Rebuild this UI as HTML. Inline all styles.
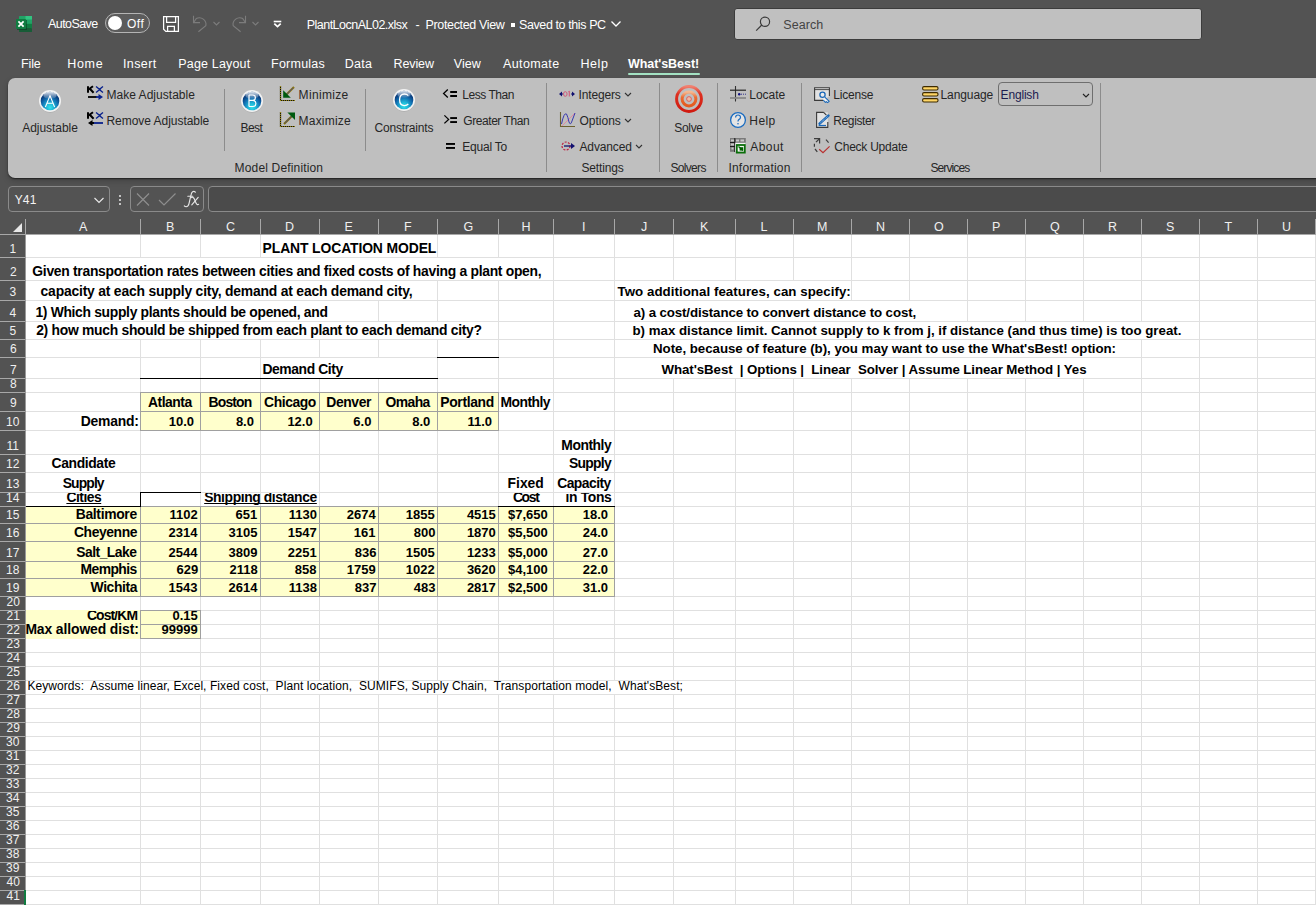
<!DOCTYPE html>
<html><head><meta charset="utf-8"><style>
html,body{margin:0;padding:0}
body{width:1316px;height:905px;overflow:hidden;position:relative;background:#535353;font-family:"Liberation Sans",sans-serif}
.t{position:absolute;white-space:pre;line-height:normal;color:#000;text-decoration-skip-ink:none}
svg{overflow:visible}
</style></head><body>
<div style="position:absolute;left:105px;top:13px;width:43px;height:18px;border:1px solid #b4b4b4;border-radius:10px;background:#5c5c5c"></div><div style="position:absolute;left:108px;top:16px;width:14px;height:14px;border-radius:7px;background:#fff"></div><svg style="position:absolute;left:0;top:0" width="40" height="40" viewBox="0 0 40 40">
<rect x="19" y="16" width="13" height="16" rx="0.6" fill="#21a366"/>
<rect x="25.5" y="16" width="6.5" height="3.5" fill="#33c481"/>
<rect x="19" y="23.8" width="13" height="4.3" fill="#107c41"/>
<rect x="19" y="28" width="13" height="4" rx="0.6" fill="#185c37"/>
<rect x="17" y="20" width="10" height="10" fill="#0a3a20" opacity="0.55"/>
<rect x="16" y="19" width="10" height="10" rx="0.8" fill="#107c41"/>
<path d="M18.4 21.3 L23.6 26.7 M23.6 21.3 L18.4 26.7" stroke="#fff" stroke-width="1.7"/>
</svg><svg style="position:absolute;left:0;top:0" width="200" height="40" viewBox="0 0 200 40" fill="none" stroke="#fff" stroke-width="1.25">
<path d="M163.6 16.6 H178.4 V31.4 H165.8 L163.6 29.2 Z"/>
<path d="M166.6 16.6 V22.4 H175.6 V16.6"/>
<path d="M167.6 31.4 V26.4 H174.4 V31.4"/>
</svg><svg style="position:absolute;left:0;top:0" width="300" height="45" viewBox="0 0 300 45" fill="none">
<g stroke="#7c7c7c" stroke-width="1.1">
<path d="M193.5 15.8 V22.6 H200"/>
<path d="M193.8 22.3 L196.2 18.6 A6.6 6.6 0 0 1 205.8 25.8 L198.4 31.8"/>
<path d="M213.5 22 L216.5 25 L219.5 22"/>
<path d="M245.5 15.8 V22.6 H239"/>
<path d="M245.2 22.3 L242.8 18.6 A6.6 6.6 0 0 0 233.2 25.8 L240.6 31.8"/>
<path d="M252.5 22 L255.5 25 L258.5 22"/>
</g>
<path d="M273.7 21.5 H281.3" stroke="#fff" stroke-width="1.6"/>
<path d="M274.3 23.6 L277.5 26.6 L280.7 23.6" stroke="#fff" stroke-width="1.7"/>
</svg><div style="position:absolute;left:511px;top:23px;width:4px;height:4px;background:#fff;"></div><svg style="position:absolute;left:610px;top:20px" width="12" height="8" viewBox="0 0 12 8" fill="none" stroke="#fff" stroke-width="1.3">
<path d="M1.5 1.5 L6 6 L10.5 1.5"/></svg><div style="position:absolute;left:734px;top:8px;width:466px;height:30px;background:#c0c0c0;border:1px solid #3c3c3c;border-radius:3px;box-sizing:content-box"></div><svg style="position:absolute;left:754px;top:15px" width="18" height="18" viewBox="0 0 18 18" fill="none" stroke="#3a3a3a" stroke-width="1.2">
<circle cx="11" cy="6.8" r="4.6"/><path d="M7.8 10 L2.2 15.6"/></svg><div style="position:absolute;left:628px;top:73px;width:72px;height:2px;background:#a3e2c3;border-radius:1px"></div><div style="position:absolute;left:8px;top:78px;width:1320px;height:100px;background:#bfbfbf;border-radius:7px;box-shadow:0 1px 1.5px rgba(0,0,0,0.55), 0 3px 6px rgba(0,0,0,0.18)"></div><svg style="position:absolute;left:38px;top:88.5px" width="24" height="25" viewBox="0 0 24 25">
<defs><radialGradient id="ga" cx="0.5" cy="0.78" r="0.62" fx="0.5" fy="0.85">
<stop offset="0" stop-color="#35e2ea"/><stop offset="0.35" stop-color="#1fb4d6"/><stop offset="0.7" stop-color="#1170b2"/><stop offset="1" stop-color="#0a3f80"/></radialGradient>
<linearGradient id="gah" x1="0" y1="0" x2="0" y2="1"><stop offset="0" stop-color="#ffffff" stop-opacity="0.85"/><stop offset="1" stop-color="#ffffff" stop-opacity="0.05"/></linearGradient></defs>
<ellipse cx="12" cy="13.2" rx="10.6" ry="10.6" fill="#808080" opacity="0.3"/>
<circle cx="12" cy="12" r="11" fill="#f2f2f2"/>
<circle cx="12" cy="12" r="9.3" fill="url(#ga)"/>
<ellipse cx="12" cy="6.4" rx="6.6" ry="3.6" fill="url(#gah)"/>
<path d="M7.4 18 L12 6.6 L16.6 18 M8.9 14.2 H15.1" fill="none" stroke="#fff" stroke-width="1.1"/>
</svg><svg style="position:absolute;left:240px;top:88.5px" width="24" height="25" viewBox="0 0 24 25">
<defs><radialGradient id="gb" cx="0.5" cy="0.78" r="0.62" fx="0.5" fy="0.85">
<stop offset="0" stop-color="#35e2ea"/><stop offset="0.35" stop-color="#1fb4d6"/><stop offset="0.7" stop-color="#1170b2"/><stop offset="1" stop-color="#0a3f80"/></radialGradient>
<linearGradient id="gbh" x1="0" y1="0" x2="0" y2="1"><stop offset="0" stop-color="#ffffff" stop-opacity="0.85"/><stop offset="1" stop-color="#ffffff" stop-opacity="0.05"/></linearGradient></defs>
<ellipse cx="12" cy="13.2" rx="10.6" ry="10.6" fill="#808080" opacity="0.3"/>
<circle cx="12" cy="12" r="11" fill="#f2f2f2"/>
<circle cx="12" cy="12" r="9.3" fill="url(#gb)"/>
<ellipse cx="12" cy="6.4" rx="6.6" ry="3.6" fill="url(#gbh)"/>
<path d="M9 6 V17.5 M9 6 H12.6 Q15.4 6 15.4 8.7 Q15.4 11.3 12.6 11.4 H9 M12.6 11.4 Q15.9 11.5 15.9 14.4 Q15.9 17.5 12.6 17.5 H9" fill="none" stroke="#fff" stroke-width="1.2"/>
</svg><svg style="position:absolute;left:392px;top:88px" width="24" height="25" viewBox="0 0 24 25">
<defs><radialGradient id="gc" cx="0.5" cy="0.78" r="0.62" fx="0.5" fy="0.85">
<stop offset="0" stop-color="#35e2ea"/><stop offset="0.35" stop-color="#1fb4d6"/><stop offset="0.7" stop-color="#1170b2"/><stop offset="1" stop-color="#0a3f80"/></radialGradient>
<linearGradient id="gch" x1="0" y1="0" x2="0" y2="1"><stop offset="0" stop-color="#ffffff" stop-opacity="0.85"/><stop offset="1" stop-color="#ffffff" stop-opacity="0.05"/></linearGradient></defs>
<ellipse cx="12" cy="13.2" rx="10.6" ry="10.6" fill="#808080" opacity="0.3"/>
<circle cx="12" cy="12" r="11" fill="#f2f2f2"/>
<circle cx="12" cy="12" r="9.3" fill="url(#gc)"/>
<ellipse cx="12" cy="6.4" rx="6.6" ry="3.6" fill="url(#gch)"/>
<path d="M16.3 7.6 Q14.9 6 12.4 6 Q7.6 6 7.6 11.8 Q7.6 17.6 12.4 17.6 Q14.9 17.6 16.3 16" fill="none" stroke="#fff" stroke-width="1.3"/>
</svg><div style="position:absolute;left:224px;top:89px;width:1px;height:62px;background:#8c8c8c;"></div><div style="position:absolute;left:365px;top:89px;width:1px;height:62px;background:#8c8c8c;"></div><div style="position:absolute;left:546px;top:83px;width:1px;height:89px;background:#8c8c8c;"></div><div style="position:absolute;left:659px;top:83px;width:1px;height:89px;background:#8c8c8c;"></div><div style="position:absolute;left:717px;top:83px;width:1px;height:89px;background:#8c8c8c;"></div><div style="position:absolute;left:801px;top:83px;width:1px;height:89px;background:#8c8c8c;"></div><div style="position:absolute;left:1100px;top:83px;width:1px;height:89px;background:#8c8c8c;"></div><svg style="position:absolute;left:0;top:0" width="470" height="160" viewBox="0 0 470 160" fill="none">
<path d="M447.8 89.6 L443.6 93.5 L447.8 97.4" stroke="#000" stroke-width="1.3"/>
<path d="M444.4 115.4 L448.6 119.4 L444.4 123.4" stroke="#000" stroke-width="1.3"/>
<g fill="#000"><rect x="450.2" y="91" width="6.8" height="2"/><rect x="450.2" y="95" width="6.8" height="2"/>
<rect x="450.2" y="117.1" width="6.8" height="1.9"/><rect x="450.2" y="121.1" width="6.8" height="1.9"/>
<rect x="446" y="143" width="9" height="1.9"/><rect x="446" y="147" width="9" height="1.9"/></g>
</svg><svg style="position:absolute;left:624px;top:92px" width="8" height="5" viewBox="0 0 8 5" fill="none" stroke="#333" stroke-width="1.1"><path d="M1 1 L4 4 L7 1"/></svg><svg style="position:absolute;left:624px;top:118px" width="8" height="5" viewBox="0 0 8 5" fill="none" stroke="#333" stroke-width="1.1"><path d="M1 1 L4 4 L7 1"/></svg><svg style="position:absolute;left:635px;top:144px" width="8" height="5" viewBox="0 0 8 5" fill="none" stroke="#333" stroke-width="1.1"><path d="M1 1 L4 4 L7 1"/></svg><svg style="position:absolute;left:86px;top:85px" width="18" height="42" viewBox="0 0 18 42">
<path d="M2 1.2 V7.8 M2 4.8 L7 1.2 M3.8 3.7 L7.6 7.8" fill="none" stroke="#000" stroke-width="2"/>
<path d="M10 1.5 Q11.5 2.5 13.5 4.5 Q15.5 6.5 17 7.5 M17 1.5 Q15.5 2.5 13.5 4.5 Q11.5 6.5 10 7.5" fill="none" stroke="#08208c" stroke-width="1.4"/>
<path d="M2 12 H11" stroke="#000" stroke-width="1.8"/><path d="M10 12 H13" stroke="#08208c" stroke-width="1.8"/>
<path d="M12.5 9 L17 12 L12.5 15 Z" fill="#08208c"/>
<path d="M2 27.2 V33.8 M2 30.8 L7 27.2 M3.8 29.7 L7.6 33.8" fill="none" stroke="#000" stroke-width="2"/>
<path d="M10 27.5 Q11.5 28.5 13.5 30.5 Q15.5 32.5 17 33.5 M17 27.5 Q15.5 28.5 13.5 30.5 Q11.5 32.5 10 33.5" fill="none" stroke="#08208c" stroke-width="1.4"/>
<path d="M6 38 H17" stroke="#08208c" stroke-width="1.8"/><path d="M5 38 H8" stroke="#000" stroke-width="1.8"/>
<path d="M6.5 35 L2 38 L6.5 41 Z" fill="#000"/>
</svg><svg style="position:absolute;left:278px;top:84px" width="19" height="45" viewBox="0 0 19 45">
<g stroke="#111" stroke-width="1.2" fill="none"><path d="M2.5 2 V16.5 H17"/><path d="M2.5 28 V42.5 H17"/></g>
<g stroke="#c0a800" stroke-width="1.2" fill="none" stroke-dasharray="0.7 1.3"><path d="M2.5 2 V16.5 H17"/><path d="M2.5 28 V42.5 H17"/></g>
<path d="M16 3 L8 11" stroke="#857318" stroke-width="2.2"/><path d="M15 4 L8 11" stroke="#4040a0" stroke-width="0.6"/>
<path d="M5.2 6.2 V13.8 H12.8 Z" fill="#005a10"/>
<path d="M6 40 L14 32" stroke="#7a6a10" stroke-width="2.2"/><path d="M7 39 L14 32" stroke="#4040a0" stroke-width="0.6"/>
<path d="M9.4 28.4 H17 V36 Z" fill="#005a10"/>
</svg><svg style="position:absolute;left:557px;top:88px" width="20" height="66" viewBox="0 0 20 66">
<path d="M2 6 L5 3.5 V8.5 Z M18 6 L15 3.5 V8.5 Z" fill="#101070"/>
<path d="M4 6 H6 M14 6 H16" stroke="#101070" stroke-width="1"/>
<ellipse cx="8.3" cy="6" rx="1.8" ry="2.3" fill="none" stroke="#d05a7a" stroke-width="1"/>
<path d="M11.3 3.8 L12.3 3.5 V8.5" fill="none" stroke="#d05a7a" stroke-width="1.1"/>
<path d="M3.5 24 V38.5 H18" fill="none" stroke="#6b6030" stroke-width="1.1"/>
<path d="M5 38 L18 25" stroke="#e08aa0" stroke-width="1"/>
<path d="M4.5 36 Q7 24 9.5 26 Q11 29 12 34 Q13.5 38 15 33 L18 25" fill="none" stroke="#3838b0" stroke-width="1"/>
<circle cx="9" cy="58" r="4" fill="none" stroke="#c02040" stroke-width="1.2" stroke-dasharray="2 1.4"/>
<path d="M7 58 H15" stroke="#101070" stroke-width="1.3"/><path d="M14 55 L18 58 L14 61 Z" fill="#101070"/>
</svg><svg style="position:absolute;left:673px;top:83px" width="32" height="32" viewBox="0 0 32 32">
<defs><linearGradient id="gt" x1="0" y1="0" x2="0" y2="1"><stop offset="0" stop-color="#f08070"/><stop offset="0.3" stop-color="#dd3020"/><stop offset="1" stop-color="#d01a10"/></linearGradient>
<linearGradient id="gt2" x1="0" y1="0" x2="0" y2="1"><stop offset="0" stop-color="#f6b890"/><stop offset="0.4" stop-color="#ea6a30"/><stop offset="1" stop-color="#e45a20"/></linearGradient></defs>
<circle cx="16" cy="16" r="12.4" fill="none" stroke="url(#gt)" stroke-width="3"/>
<circle cx="16" cy="16" r="6.9" fill="none" stroke="url(#gt2)" stroke-width="3"/>
<circle cx="16" cy="16" r="2.4" fill="#f2b8a0" stroke="#d85050" stroke-width="0.8"/>
</svg><svg style="position:absolute;left:728px;top:84px" width="20" height="72" viewBox="0 0 20 72">
<path d="M7.5 2 V17.5" stroke="#333" stroke-width="1.1"/>
<path d="M2 6.2 H18" stroke="#262626" stroke-width="1.2"/>
<path d="M2 14 H18" stroke="#8a8a8a" stroke-width="1.8"/>
<circle cx="11.2" cy="10.2" r="1.2" fill="#101080"/><path d="M13 10.2 H18" stroke="#101080" stroke-width="0.8" stroke-dasharray="1 1"/>
<circle cx="10" cy="36" r="7.4" fill="#e4e4e4" stroke="#1a6cc0" stroke-width="1.3"/>
<path d="M7.6 33.6 Q7.6 31 10 31 Q12.5 31 12.5 33.3 Q12.5 34.8 10.8 35.6 Q10 36 10 37.6" fill="none" stroke="#1a6cc0" stroke-width="1.2"/>
<circle cx="10" cy="39.8" r="0.8" fill="#1a6cc0"/>
<rect x="2" y="54" width="15.8" height="13.8" fill="#7a7a7a"/>
<g fill="#c8c8c8"><rect x="3" y="55.5" width="3" height="2"/><rect x="3" y="59.5" width="3" height="2"/><rect x="3.5" y="63.5" width="2" height="2"/><rect x="8" y="55.5" width="3" height="2"/><rect x="12.5" y="55.5" width="3.5" height="2"/></g>
<path d="M6.8 54 V68 M2 58.5 H6.8 M2 62.5 H6.8" stroke="#111" stroke-width="0.9"/>
<rect x="7.2" y="58.8" width="10.4" height="9" fill="#f4f4f4"/>
<rect x="8.8" y="61" width="8" height="7.6" fill="none" stroke="#0a6e0a" stroke-width="1.8"/>
<path d="M10.5 62.5 L15 66.5" stroke="#0a6e0a" stroke-width="1.4"/><rect x="11.6" y="63.2" width="3.6" height="3.4" fill="#006000"/>
</svg><svg style="position:absolute;left:812px;top:84px" width="20" height="72" viewBox="0 0 20 72">
<path d="M17.4 12 V3.8 H2.6 V16.4 H11" fill="#e2e2e2" stroke="#3a3a3a" stroke-width="1.1"/><path d="M2.6 5.6 H17.4" stroke="#3a3a3a" stroke-width="0.9"/>
<circle cx="10.5" cy="10.7" r="2.6" fill="#ececec" stroke="#1a68b8" stroke-width="1.3"/>
<path d="M12.3 12.6 L17.2 17.4 L15.6 18.6 L14.4 17.6 L13.4 18.4 L11.2 16 " fill="#f0f0f0" stroke="#1a68b8" stroke-width="1.1" stroke-linejoin="round"/>
<rect x="4.6" y="28.4" width="11.2" height="15" fill="#e2e2e2"/><path d="M11.6 28.4 H4.6 V43.4 H15.8 V38 M11.6 28.4 L14.4 31.2" fill="none" stroke="#3a3a3a" stroke-width="1.1"/>
<path d="M7.6 39.6 L16.4 31.6" stroke="#1a68b8" stroke-width="2.6" stroke-linecap="round"/><path d="M8.6 38.7 L15.6 32.4" stroke="#e8f0f8" stroke-width="0.8" stroke-dasharray="0.9 0.9"/>
<path d="M6.6 41.5 H14" stroke="#1a68b8" stroke-width="1.2"/>
<g fill="none" stroke="#3c3c3c" stroke-width="1.2"><path d="M2 54.6 H7.6 V59.6"/><path d="M7.2 55 L4 58.2"/>
<path d="M2.4 59.8 V62.8"/><path d="M3 65 L5.3 67.8"/><path d="M14 55.6 L16.6 58.6"/></g>
<path d="M7.2 65.2 L11 68.6 L17.6 62.4" fill="none" stroke="#b83030" stroke-width="1.2"/>
</svg><svg style="position:absolute;left:921px;top:85px" width="19" height="19" viewBox="0 0 19 19">
<g fill="#ffd666" stroke="#3d2a00" stroke-width="1.1">
<rect x="1.6" y="1.6" width="15.4" height="3.4" rx="1.4"/><rect x="1.6" y="7.6" width="15.4" height="3.4" rx="1.4"/><rect x="1.6" y="13.6" width="15.4" height="3.4" rx="1.4"/></g>
</svg><div style="position:absolute;left:998px;top:82px;width:93px;height:22px;border:1px solid #6e6e6e;border-radius:4px"></div><svg style="position:absolute;left:1082px;top:93px" width="8" height="5" viewBox="0 0 8 5" fill="none" stroke="#222" stroke-width="1.1"><path d="M1 1 L4 4 L7 1"/></svg><div style="position:absolute;left:8px;top:186px;width:100px;height:24px;border:1px solid #8a8a8a;border-radius:4px"></div><svg style="position:absolute;left:93px;top:196px" width="12" height="9" viewBox="0 0 12 9" fill="none" stroke="#e8e8e8" stroke-width="1.2"><path d="M1.5 2 L6 6.5 L10.5 2"/></svg><div style="position:absolute;left:119px;top:194.5px;width:2px;height:2px;background:#e8e8e8;border-radius:1px"></div><div style="position:absolute;left:119px;top:198.5px;width:2px;height:2px;background:#e8e8e8;border-radius:1px"></div><div style="position:absolute;left:119px;top:202.5px;width:2px;height:2px;background:#e8e8e8;border-radius:1px"></div><div style="position:absolute;left:130px;top:186px;width:72px;height:24px;border:1px solid #8a8a8a;border-radius:4px"></div><svg style="position:absolute;left:135px;top:192px" width="44" height="15" viewBox="0 0 44 15" fill="none" stroke="#8e8e8e" stroke-width="1.2"><path d="M2 1.5 L14 13.5 M14 1.5 L2 13.5"/><path d="M24 8 L29 13 L40.5 1.5"/></svg><svg style="position:absolute;left:0;top:0" width="220" height="220" viewBox="0 0 220 220" fill="none" stroke="#e6e6e6" stroke-width="1.15" stroke-linecap="round"><path d="M195.4 192.2 Q194 190.9 192.6 191.8 Q191.4 192.6 190.8 196 L189 203.6 Q188.3 206.6 186.2 206.7 Q185 206.7 184.3 205.9"/><path d="M187.8 196.2 H192.8"/><path d="M191.6 197.6 Q193.2 196.6 194.2 198.8 L196 203 Q197 205.2 198.6 204.3"/><path d="M198.2 197.4 L191.8 204.8"/></svg><div style="position:absolute;left:208px;top:186px;width:1120px;height:24px;border:1px solid #8a8a8a;border-radius:4px;background:#4b4b4b"></div><div style="position:absolute;left:26px;top:235px;width:1290px;height:670px;background:#ffffff;"></div><div style="position:absolute;left:0px;top:891px;width:24px;height:14px;background:#666666;"></div><div style="position:absolute;left:26px;top:257px;width:1290px;height:1px;background:#e0e0e0"></div><div style="position:absolute;left:26px;top:280px;width:1290px;height:1px;background:#e0e0e0"></div><div style="position:absolute;left:26px;top:300px;width:1290px;height:1px;background:#e0e0e0"></div><div style="position:absolute;left:26px;top:321px;width:1290px;height:1px;background:#e0e0e0"></div><div style="position:absolute;left:26px;top:339px;width:1290px;height:1px;background:#e0e0e0"></div><div style="position:absolute;left:26px;top:357px;width:1290px;height:1px;background:#e0e0e0"></div><div style="position:absolute;left:26px;top:378px;width:1290px;height:1px;background:#e0e0e0"></div><div style="position:absolute;left:26px;top:392px;width:1290px;height:1px;background:#e0e0e0"></div><div style="position:absolute;left:26px;top:411px;width:1290px;height:1px;background:#e0e0e0"></div><div style="position:absolute;left:26px;top:430px;width:1290px;height:1px;background:#e0e0e0"></div><div style="position:absolute;left:26px;top:454px;width:1290px;height:1px;background:#e0e0e0"></div><div style="position:absolute;left:26px;top:472px;width:1290px;height:1px;background:#e0e0e0"></div><div style="position:absolute;left:26px;top:492px;width:1290px;height:1px;background:#e0e0e0"></div><div style="position:absolute;left:26px;top:506px;width:1290px;height:1px;background:#e0e0e0"></div><div style="position:absolute;left:26px;top:523px;width:1290px;height:1px;background:#e0e0e0"></div><div style="position:absolute;left:26px;top:541px;width:1290px;height:1px;background:#e0e0e0"></div><div style="position:absolute;left:26px;top:561px;width:1290px;height:1px;background:#e0e0e0"></div><div style="position:absolute;left:26px;top:578px;width:1290px;height:1px;background:#e0e0e0"></div><div style="position:absolute;left:26px;top:596px;width:1290px;height:1px;background:#e0e0e0"></div><div style="position:absolute;left:26px;top:610px;width:1290px;height:1px;background:#e0e0e0"></div><div style="position:absolute;left:26px;top:624px;width:1290px;height:1px;background:#e0e0e0"></div><div style="position:absolute;left:26px;top:638px;width:1290px;height:1px;background:#e0e0e0"></div><div style="position:absolute;left:26px;top:652px;width:1290px;height:1px;background:#e0e0e0"></div><div style="position:absolute;left:26px;top:666px;width:1290px;height:1px;background:#e0e0e0"></div><div style="position:absolute;left:26px;top:680px;width:1290px;height:1px;background:#e0e0e0"></div><div style="position:absolute;left:26px;top:694px;width:1290px;height:1px;background:#e0e0e0"></div><div style="position:absolute;left:26px;top:708px;width:1290px;height:1px;background:#e0e0e0"></div><div style="position:absolute;left:26px;top:722px;width:1290px;height:1px;background:#e0e0e0"></div><div style="position:absolute;left:26px;top:736px;width:1290px;height:1px;background:#e0e0e0"></div><div style="position:absolute;left:26px;top:750px;width:1290px;height:1px;background:#e0e0e0"></div><div style="position:absolute;left:26px;top:764px;width:1290px;height:1px;background:#e0e0e0"></div><div style="position:absolute;left:26px;top:778px;width:1290px;height:1px;background:#e0e0e0"></div><div style="position:absolute;left:26px;top:792px;width:1290px;height:1px;background:#e0e0e0"></div><div style="position:absolute;left:26px;top:806px;width:1290px;height:1px;background:#e0e0e0"></div><div style="position:absolute;left:26px;top:820px;width:1290px;height:1px;background:#e0e0e0"></div><div style="position:absolute;left:26px;top:834px;width:1290px;height:1px;background:#e0e0e0"></div><div style="position:absolute;left:26px;top:848px;width:1290px;height:1px;background:#e0e0e0"></div><div style="position:absolute;left:26px;top:862px;width:1290px;height:1px;background:#e0e0e0"></div><div style="position:absolute;left:26px;top:876px;width:1290px;height:1px;background:#e0e0e0"></div><div style="position:absolute;left:26px;top:890px;width:1290px;height:1px;background:#e0e0e0"></div><div style="position:absolute;left:26px;top:904px;width:1290px;height:1px;background:#e0e0e0"></div><div style="position:absolute;left:140px;top:235px;width:1px;height:23px;background:#e0e0e0"></div><div style="position:absolute;left:140px;top:340px;width:1px;height:271px;background:#e0e0e0"></div><div style="position:absolute;left:140px;top:639px;width:1px;height:42px;background:#e0e0e0"></div><div style="position:absolute;left:140px;top:695px;width:1px;height:210px;background:#e0e0e0"></div><div style="position:absolute;left:200px;top:235px;width:1px;height:23px;background:#e0e0e0"></div><div style="position:absolute;left:200px;top:340px;width:1px;height:341px;background:#e0e0e0"></div><div style="position:absolute;left:200px;top:695px;width:1px;height:210px;background:#e0e0e0"></div><div style="position:absolute;left:260px;top:235px;width:1px;height:23px;background:#e0e0e0"></div><div style="position:absolute;left:260px;top:340px;width:1px;height:341px;background:#e0e0e0"></div><div style="position:absolute;left:260px;top:695px;width:1px;height:210px;background:#e0e0e0"></div><div style="position:absolute;left:319px;top:340px;width:1px;height:18px;background:#e0e0e0"></div><div style="position:absolute;left:319px;top:379px;width:1px;height:302px;background:#e0e0e0"></div><div style="position:absolute;left:319px;top:695px;width:1px;height:210px;background:#e0e0e0"></div><div style="position:absolute;left:378px;top:301px;width:1px;height:21px;background:#e0e0e0"></div><div style="position:absolute;left:378px;top:340px;width:1px;height:18px;background:#e0e0e0"></div><div style="position:absolute;left:378px;top:379px;width:1px;height:302px;background:#e0e0e0"></div><div style="position:absolute;left:378px;top:695px;width:1px;height:210px;background:#e0e0e0"></div><div style="position:absolute;left:437px;top:235px;width:1px;height:23px;background:#e0e0e0"></div><div style="position:absolute;left:437px;top:281px;width:1px;height:41px;background:#e0e0e0"></div><div style="position:absolute;left:437px;top:340px;width:1px;height:341px;background:#e0e0e0"></div><div style="position:absolute;left:437px;top:695px;width:1px;height:210px;background:#e0e0e0"></div><div style="position:absolute;left:498px;top:235px;width:1px;height:23px;background:#e0e0e0"></div><div style="position:absolute;left:498px;top:281px;width:1px;height:400px;background:#e0e0e0"></div><div style="position:absolute;left:498px;top:695px;width:1px;height:210px;background:#e0e0e0"></div><div style="position:absolute;left:553px;top:235px;width:1px;height:446px;background:#e0e0e0"></div><div style="position:absolute;left:553px;top:695px;width:1px;height:210px;background:#e0e0e0"></div><div style="position:absolute;left:614px;top:235px;width:1px;height:446px;background:#e0e0e0"></div><div style="position:absolute;left:614px;top:695px;width:1px;height:210px;background:#e0e0e0"></div><div style="position:absolute;left:673px;top:235px;width:1px;height:46px;background:#e0e0e0"></div><div style="position:absolute;left:673px;top:379px;width:1px;height:302px;background:#e0e0e0"></div><div style="position:absolute;left:673px;top:695px;width:1px;height:210px;background:#e0e0e0"></div><div style="position:absolute;left:735px;top:235px;width:1px;height:46px;background:#e0e0e0"></div><div style="position:absolute;left:735px;top:379px;width:1px;height:526px;background:#e0e0e0"></div><div style="position:absolute;left:793px;top:235px;width:1px;height:46px;background:#e0e0e0"></div><div style="position:absolute;left:793px;top:379px;width:1px;height:526px;background:#e0e0e0"></div><div style="position:absolute;left:851px;top:235px;width:1px;height:66px;background:#e0e0e0"></div><div style="position:absolute;left:851px;top:379px;width:1px;height:526px;background:#e0e0e0"></div><div style="position:absolute;left:909px;top:235px;width:1px;height:66px;background:#e0e0e0"></div><div style="position:absolute;left:909px;top:379px;width:1px;height:526px;background:#e0e0e0"></div><div style="position:absolute;left:967px;top:235px;width:1px;height:87px;background:#e0e0e0"></div><div style="position:absolute;left:967px;top:379px;width:1px;height:526px;background:#e0e0e0"></div><div style="position:absolute;left:1025px;top:235px;width:1px;height:87px;background:#e0e0e0"></div><div style="position:absolute;left:1025px;top:379px;width:1px;height:526px;background:#e0e0e0"></div><div style="position:absolute;left:1083px;top:235px;width:1px;height:87px;background:#e0e0e0"></div><div style="position:absolute;left:1083px;top:379px;width:1px;height:526px;background:#e0e0e0"></div><div style="position:absolute;left:1141px;top:235px;width:1px;height:87px;background:#e0e0e0"></div><div style="position:absolute;left:1141px;top:340px;width:1px;height:565px;background:#e0e0e0"></div><div style="position:absolute;left:1199px;top:235px;width:1px;height:670px;background:#e0e0e0"></div><div style="position:absolute;left:1257px;top:235px;width:1px;height:670px;background:#e0e0e0"></div><div style="position:absolute;left:1315px;top:235px;width:1px;height:670px;background:#e0e0e0"></div><div style="position:absolute;left:0px;top:234px;width:25px;height:671px;background:#535353;"></div><div style="position:absolute;left:25px;top:219px;width:1px;height:15px;background:#a8a8a8;"></div><div style="position:absolute;left:140px;top:219px;width:1px;height:15px;background:#a8a8a8;"></div><div style="position:absolute;left:200px;top:219px;width:1px;height:15px;background:#a8a8a8;"></div><div style="position:absolute;left:260px;top:219px;width:1px;height:15px;background:#a8a8a8;"></div><div style="position:absolute;left:319px;top:219px;width:1px;height:15px;background:#a8a8a8;"></div><div style="position:absolute;left:378px;top:219px;width:1px;height:15px;background:#a8a8a8;"></div><div style="position:absolute;left:437px;top:219px;width:1px;height:15px;background:#a8a8a8;"></div><div style="position:absolute;left:498px;top:219px;width:1px;height:15px;background:#a8a8a8;"></div><div style="position:absolute;left:553px;top:219px;width:1px;height:15px;background:#a8a8a8;"></div><div style="position:absolute;left:614px;top:219px;width:1px;height:15px;background:#a8a8a8;"></div><div style="position:absolute;left:673px;top:219px;width:1px;height:15px;background:#a8a8a8;"></div><div style="position:absolute;left:735px;top:219px;width:1px;height:15px;background:#a8a8a8;"></div><div style="position:absolute;left:793px;top:219px;width:1px;height:15px;background:#a8a8a8;"></div><div style="position:absolute;left:851px;top:219px;width:1px;height:15px;background:#a8a8a8;"></div><div style="position:absolute;left:909px;top:219px;width:1px;height:15px;background:#a8a8a8;"></div><div style="position:absolute;left:967px;top:219px;width:1px;height:15px;background:#a8a8a8;"></div><div style="position:absolute;left:1025px;top:219px;width:1px;height:15px;background:#a8a8a8;"></div><div style="position:absolute;left:1083px;top:219px;width:1px;height:15px;background:#a8a8a8;"></div><div style="position:absolute;left:1141px;top:219px;width:1px;height:15px;background:#a8a8a8;"></div><div style="position:absolute;left:1199px;top:219px;width:1px;height:15px;background:#a8a8a8;"></div><div style="position:absolute;left:1257px;top:219px;width:1px;height:15px;background:#a8a8a8;"></div><div style="position:absolute;left:1315px;top:219px;width:1px;height:15px;background:#a8a8a8;"></div><div style="position:absolute;left:0px;top:234px;width:1316px;height:1px;background:#a8a8a8;"></div><div style="position:absolute;left:25px;top:235px;width:1px;height:670px;background:#9a9a9a;"></div><div style="position:absolute;left:0px;top:257px;width:25px;height:1px;background:#a8a8a8;"></div><div style="position:absolute;left:0px;top:280px;width:25px;height:1px;background:#a8a8a8;"></div><div style="position:absolute;left:0px;top:300px;width:25px;height:1px;background:#a8a8a8;"></div><div style="position:absolute;left:0px;top:321px;width:25px;height:1px;background:#a8a8a8;"></div><div style="position:absolute;left:0px;top:339px;width:25px;height:1px;background:#a8a8a8;"></div><div style="position:absolute;left:0px;top:357px;width:25px;height:1px;background:#a8a8a8;"></div><div style="position:absolute;left:0px;top:378px;width:25px;height:1px;background:#a8a8a8;"></div><div style="position:absolute;left:0px;top:392px;width:25px;height:1px;background:#a8a8a8;"></div><div style="position:absolute;left:0px;top:411px;width:25px;height:1px;background:#a8a8a8;"></div><div style="position:absolute;left:0px;top:430px;width:25px;height:1px;background:#a8a8a8;"></div><div style="position:absolute;left:0px;top:454px;width:25px;height:1px;background:#a8a8a8;"></div><div style="position:absolute;left:0px;top:472px;width:25px;height:1px;background:#a8a8a8;"></div><div style="position:absolute;left:0px;top:492px;width:25px;height:1px;background:#a8a8a8;"></div><div style="position:absolute;left:0px;top:506px;width:25px;height:1px;background:#a8a8a8;"></div><div style="position:absolute;left:0px;top:523px;width:25px;height:1px;background:#a8a8a8;"></div><div style="position:absolute;left:0px;top:541px;width:25px;height:1px;background:#a8a8a8;"></div><div style="position:absolute;left:0px;top:561px;width:25px;height:1px;background:#a8a8a8;"></div><div style="position:absolute;left:0px;top:578px;width:25px;height:1px;background:#a8a8a8;"></div><div style="position:absolute;left:0px;top:596px;width:25px;height:1px;background:#a8a8a8;"></div><div style="position:absolute;left:0px;top:610px;width:25px;height:1px;background:#a8a8a8;"></div><div style="position:absolute;left:0px;top:624px;width:25px;height:1px;background:#a8a8a8;"></div><div style="position:absolute;left:0px;top:638px;width:25px;height:1px;background:#a8a8a8;"></div><div style="position:absolute;left:0px;top:652px;width:25px;height:1px;background:#a8a8a8;"></div><div style="position:absolute;left:0px;top:666px;width:25px;height:1px;background:#a8a8a8;"></div><div style="position:absolute;left:0px;top:680px;width:25px;height:1px;background:#a8a8a8;"></div><div style="position:absolute;left:0px;top:694px;width:25px;height:1px;background:#a8a8a8;"></div><div style="position:absolute;left:0px;top:708px;width:25px;height:1px;background:#a8a8a8;"></div><div style="position:absolute;left:0px;top:722px;width:25px;height:1px;background:#a8a8a8;"></div><div style="position:absolute;left:0px;top:736px;width:25px;height:1px;background:#a8a8a8;"></div><div style="position:absolute;left:0px;top:750px;width:25px;height:1px;background:#a8a8a8;"></div><div style="position:absolute;left:0px;top:764px;width:25px;height:1px;background:#a8a8a8;"></div><div style="position:absolute;left:0px;top:778px;width:25px;height:1px;background:#a8a8a8;"></div><div style="position:absolute;left:0px;top:792px;width:25px;height:1px;background:#a8a8a8;"></div><div style="position:absolute;left:0px;top:806px;width:25px;height:1px;background:#a8a8a8;"></div><div style="position:absolute;left:0px;top:820px;width:25px;height:1px;background:#a8a8a8;"></div><div style="position:absolute;left:0px;top:834px;width:25px;height:1px;background:#a8a8a8;"></div><div style="position:absolute;left:0px;top:848px;width:25px;height:1px;background:#a8a8a8;"></div><div style="position:absolute;left:0px;top:862px;width:25px;height:1px;background:#a8a8a8;"></div><div style="position:absolute;left:0px;top:876px;width:25px;height:1px;background:#a8a8a8;"></div><div style="position:absolute;left:0px;top:890px;width:25px;height:1px;background:#a8a8a8;"></div><div style="position:absolute;left:0px;top:904px;width:25px;height:1px;background:#a8a8a8;"></div><div style="position:absolute;left:24px;top:890px;width:2px;height:15px;background:#107c41;"></div><svg style="position:absolute;left:13px;top:222.5px" width="9" height="9" viewBox="0 0 9 9"><path d="M9 0 V9 H0 Z" fill="#e8e8e8"/></svg><div style="position:absolute;left:141px;top:393px;width:357px;height:37px;background:#ffffcc;"></div><div style="position:absolute;left:140px;top:392px;width:359px;height:1px;background:#a0a0a0;"></div><div style="position:absolute;left:140px;top:411px;width:359px;height:1px;background:#a0a0a0;"></div><div style="position:absolute;left:140px;top:430px;width:359px;height:1px;background:#a0a0a0;"></div><div style="position:absolute;left:140px;top:392px;width:1px;height:39px;background:#a0a0a0;"></div><div style="position:absolute;left:200px;top:392px;width:1px;height:39px;background:#a0a0a0;"></div><div style="position:absolute;left:260px;top:392px;width:1px;height:39px;background:#a0a0a0;"></div><div style="position:absolute;left:319px;top:392px;width:1px;height:39px;background:#a0a0a0;"></div><div style="position:absolute;left:378px;top:392px;width:1px;height:39px;background:#a0a0a0;"></div><div style="position:absolute;left:437px;top:392px;width:1px;height:39px;background:#a0a0a0;"></div><div style="position:absolute;left:498px;top:392px;width:1px;height:39px;background:#a0a0a0;"></div><div style="position:absolute;left:26px;top:507px;width:588px;height:89px;background:#ffffcc;"></div><div style="position:absolute;left:26px;top:523px;width:589px;height:1px;background:#a0a0a0;"></div><div style="position:absolute;left:26px;top:541px;width:589px;height:1px;background:#a0a0a0;"></div><div style="position:absolute;left:26px;top:561px;width:589px;height:1px;background:#a0a0a0;"></div><div style="position:absolute;left:26px;top:578px;width:589px;height:1px;background:#a0a0a0;"></div><div style="position:absolute;left:26px;top:596px;width:589px;height:1px;background:#a0a0a0;"></div><div style="position:absolute;left:140px;top:506px;width:359px;height:1px;background:#a0a0a0;"></div><div style="position:absolute;left:140px;top:506px;width:1px;height:91px;background:#a0a0a0;"></div><div style="position:absolute;left:200px;top:506px;width:1px;height:91px;background:#a0a0a0;"></div><div style="position:absolute;left:260px;top:506px;width:1px;height:91px;background:#a0a0a0;"></div><div style="position:absolute;left:319px;top:506px;width:1px;height:91px;background:#a0a0a0;"></div><div style="position:absolute;left:378px;top:506px;width:1px;height:91px;background:#a0a0a0;"></div><div style="position:absolute;left:437px;top:506px;width:1px;height:91px;background:#a0a0a0;"></div><div style="position:absolute;left:498px;top:506px;width:1px;height:91px;background:#a0a0a0;"></div><div style="position:absolute;left:553px;top:506px;width:1px;height:91px;background:#a0a0a0;"></div><div style="position:absolute;left:614px;top:506px;width:1px;height:91px;background:#a0a0a0;"></div><div style="position:absolute;left:26px;top:610px;width:114px;height:29px;background:#ffffcc;"></div><div style="position:absolute;left:141px;top:611px;width:59px;height:27px;background:#ffffcc;"></div><div style="position:absolute;left:140px;top:610px;width:61px;height:1px;background:#a0a0a0;"></div><div style="position:absolute;left:140px;top:624px;width:61px;height:1px;background:#a0a0a0;"></div><div style="position:absolute;left:140px;top:638px;width:61px;height:1px;background:#a0a0a0;"></div><div style="position:absolute;left:140px;top:610px;width:1px;height:29px;background:#a0a0a0;"></div><div style="position:absolute;left:200px;top:610px;width:1px;height:29px;background:#a0a0a0;"></div><div style="position:absolute;left:140px;top:378px;width:298px;height:1px;background:#000;"></div><div style="position:absolute;left:437px;top:357px;width:62px;height:1px;background:#000;"></div><div style="position:absolute;left:140px;top:492px;width:61px;height:1px;background:#000;"></div><div style="position:absolute;left:140px;top:492px;width:1px;height:15px;background:#000;"></div><div style="position:absolute;left:26px;top:506px;width:115px;height:1px;background:#000;"></div><div style="position:absolute;left:498px;top:506px;width:117px;height:1px;background:#000;"></div>
<div class="t" style="left:48.00px;top:17px;font-size:12.5px;letter-spacing:-0.571px;color:#ffffff;">AutoSave</div><div class="t" style="left:127.00px;top:17px;font-size:12px;letter-spacing:0.500px;color:#ffffff;">Off</div><div class="t" style="left:306.70px;top:18px;font-size:12.5px;letter-spacing:-0.512px;color:#ffffff;">PlantLocnAL02.xlsx</div><div class="t" style="left:415.50px;top:18px;font-size:12.5px;color:#ffffff;">-</div><div class="t" style="left:425.50px;top:18px;font-size:12.5px;letter-spacing:-0.346px;color:#ffffff;">Protected View</div><div class="t" style="left:519.00px;top:18px;font-size:12.5px;letter-spacing:-0.400px;color:#ffffff;">Saved to this PC</div><div class="t" style="left:783.30px;top:18px;font-size:12.5px;letter-spacing:0.060px;color:#444444;">Search</div><div class="t" style="left:21.00px;top:57px;font-size:12.5px;letter-spacing:-0.133px;color:#ffffff;">File</div><div class="t" style="left:67.20px;top:57px;font-size:12.5px;letter-spacing:0.700px;color:#ffffff;">Home</div><div class="t" style="left:123.00px;top:57px;font-size:12.5px;letter-spacing:0.400px;color:#ffffff;">Insert</div><div class="t" style="left:178.30px;top:57px;font-size:12.5px;letter-spacing:0.170px;color:#ffffff;">Page Layout</div><div class="t" style="left:271.00px;top:57px;font-size:12.5px;letter-spacing:0.243px;color:#ffffff;">Formulas</div><div class="t" style="left:344.80px;top:57px;font-size:12.5px;letter-spacing:0.267px;color:#ffffff;">Data</div><div class="t" style="left:393.50px;top:57px;font-size:12.5px;letter-spacing:-0.100px;color:#ffffff;">Review</div><div class="t" style="left:453.70px;top:57px;font-size:12.5px;letter-spacing:0.100px;color:#ffffff;">View</div><div class="t" style="left:503.00px;top:57px;font-size:12.5px;letter-spacing:0.371px;color:#ffffff;">Automate</div><div class="t" style="left:580.40px;top:57px;font-size:12.5px;letter-spacing:0.600px;color:#ffffff;">Help</div><div class="t" style="left:627.90px;top:57px;font-size:12.5px;font-weight:bold;letter-spacing:-0.040px;color:#ffffff;">What'sBest!</div><div class="t" style="left:22.20px;top:121px;font-size:12px;letter-spacing:-0.044px;color:#262626;">Adjustable</div><div class="t" style="left:240.60px;top:121px;font-size:12px;letter-spacing:-0.600px;color:#262626;">Best</div><div class="t" style="left:374.40px;top:121px;font-size:12px;letter-spacing:-0.170px;color:#262626;">Constraints</div><div class="t" style="left:106.40px;top:88px;font-size:12px;letter-spacing:0.036px;color:#262626;">Make Adjustable</div><div class="t" style="left:106.40px;top:114px;font-size:12px;letter-spacing:-0.031px;color:#262626;">Remove Adjustable</div><div class="t" style="left:298.60px;top:88px;font-size:12px;letter-spacing:0.329px;color:#262626;">Minimize</div><div class="t" style="left:298.60px;top:114px;font-size:12px;letter-spacing:0.200px;color:#262626;">Maximize</div><div class="t" style="left:234.60px;top:161px;font-size:12px;letter-spacing:0.160px;color:#262626;">Model Definition</div><div class="t" style="left:462.30px;top:88px;font-size:12px;letter-spacing:-0.475px;color:#262626;">Less Than</div><div class="t" style="left:463.30px;top:114px;font-size:12px;letter-spacing:-0.436px;color:#262626;">Greater Than</div><div class="t" style="left:462.30px;top:140px;font-size:12px;letter-spacing:-0.229px;color:#262626;">Equal To</div><div class="t" style="left:578.50px;top:88px;font-size:12px;letter-spacing:-0.143px;color:#262626;">Integers</div><div class="t" style="left:579.50px;top:114px;font-size:12px;color:#262626;">Options</div><div class="t" style="left:579.50px;top:140px;font-size:12px;letter-spacing:-0.143px;color:#262626;">Advanced</div><div class="t" style="left:581.50px;top:161px;font-size:12px;letter-spacing:-0.171px;color:#262626;">Settings</div><div class="t" style="left:674.30px;top:121px;font-size:12px;letter-spacing:-0.325px;color:#262626;">Solve</div><div class="t" style="left:670.50px;top:161px;font-size:12px;letter-spacing:-0.683px;color:#262626;">Solvers</div><div class="t" style="left:749.30px;top:88px;font-size:12px;letter-spacing:-0.020px;color:#262626;">Locate</div><div class="t" style="left:749.30px;top:114px;font-size:12px;letter-spacing:0.433px;color:#262626;">Help</div><div class="t" style="left:750.30px;top:140px;font-size:12px;letter-spacing:0.425px;color:#262626;">About</div><div class="t" style="left:728.50px;top:161px;font-size:12px;letter-spacing:0.180px;color:#262626;">Information</div><div class="t" style="left:833.30px;top:88px;font-size:12px;letter-spacing:-0.217px;color:#262626;">License</div><div class="t" style="left:833.30px;top:114px;font-size:12px;letter-spacing:-0.386px;color:#262626;">Register</div><div class="t" style="left:834.30px;top:140px;font-size:12px;letter-spacing:-0.245px;color:#262626;">Check Update</div><div class="t" style="left:940.50px;top:88px;font-size:12px;letter-spacing:-0.086px;color:#262626;">Language</div><div class="t" style="left:930.40px;top:161px;font-size:12px;letter-spacing:-0.886px;color:#262626;">Services</div><div class="t" style="left:1000.60px;top:88px;font-size:12px;letter-spacing:-0.183px;color:#1c1c50;">English</div><div class="t" style="left:14.70px;top:193px;font-size:12px;letter-spacing:0.150px;color:#f4f4f4;">Y41</div><div class="t" style="left:79.00px;top:220px;font-size:12.5px;color:#f0f0f0;">A</div><div class="t" style="left:166.00px;top:220px;font-size:12.5px;color:#f0f0f0;">B</div><div class="t" style="left:226.00px;top:220px;font-size:12.5px;color:#f0f0f0;">C</div><div class="t" style="left:285.00px;top:220px;font-size:12.5px;color:#f0f0f0;">D</div><div class="t" style="left:344.50px;top:220px;font-size:12.5px;color:#f0f0f0;">E</div><div class="t" style="left:404.00px;top:220px;font-size:12.5px;color:#f0f0f0;">F</div><div class="t" style="left:463.50px;top:220px;font-size:12.5px;color:#f0f0f0;">G</div><div class="t" style="left:521.50px;top:220px;font-size:12.5px;color:#f0f0f0;">H</div><div class="t" style="left:582.00px;top:220px;font-size:12.5px;color:#f0f0f0;">I</div><div class="t" style="left:641.00px;top:220px;font-size:12.5px;color:#f0f0f0;">J</div><div class="t" style="left:700.00px;top:220px;font-size:12.5px;color:#f0f0f0;">K</div><div class="t" style="left:760.50px;top:220px;font-size:12.5px;color:#f0f0f0;">L</div><div class="t" style="left:817.00px;top:220px;font-size:12.5px;color:#f0f0f0;">M</div><div class="t" style="left:876.00px;top:220px;font-size:12.5px;color:#f0f0f0;">N</div><div class="t" style="left:934.00px;top:220px;font-size:12.5px;color:#f0f0f0;">O</div><div class="t" style="left:992.00px;top:220px;font-size:12.5px;color:#f0f0f0;">P</div><div class="t" style="left:1050.00px;top:220px;font-size:12.5px;color:#f0f0f0;">Q</div><div class="t" style="left:1108.00px;top:220px;font-size:12.5px;color:#f0f0f0;">R</div><div class="t" style="left:1166.00px;top:220px;font-size:12.5px;color:#f0f0f0;">S</div><div class="t" style="left:1224.50px;top:220px;font-size:12.5px;color:#f0f0f0;">T</div><div class="t" style="left:1282.00px;top:220px;font-size:12.5px;color:#f0f0f0;">U</div><div style="position:absolute;left:0;top:235px;width:1316px;height:22px;overflow:hidden"><div class="t" style="left:9.50px;top:7px;font-size:12px;color:#f0f0f0;">1</div></div><div style="position:absolute;left:0;top:258px;width:1316px;height:22px;overflow:hidden"><div class="t" style="left:10.00px;top:7px;font-size:12px;color:#f0f0f0;">2</div></div><div style="position:absolute;left:0;top:281px;width:1316px;height:19px;overflow:hidden"><div class="t" style="left:9.50px;top:4px;font-size:12px;color:#f0f0f0;">3</div></div><div style="position:absolute;left:0;top:301px;width:1316px;height:20px;overflow:hidden"><div class="t" style="left:9.50px;top:5px;font-size:12px;color:#f0f0f0;">4</div></div><div style="position:absolute;left:0;top:322px;width:1316px;height:17px;overflow:hidden"><div class="t" style="left:9.50px;top:2px;font-size:12px;color:#f0f0f0;">5</div></div><div style="position:absolute;left:0;top:340px;width:1316px;height:17px;overflow:hidden"><div class="t" style="left:10.00px;top:2px;font-size:12px;color:#f0f0f0;">6</div></div><div style="position:absolute;left:0;top:358px;width:1316px;height:20px;overflow:hidden"><div class="t" style="left:10.00px;top:5px;font-size:12px;color:#f0f0f0;">7</div></div><div style="position:absolute;left:0;top:379px;width:1316px;height:13px;overflow:hidden"><div class="t" style="left:10.00px;top:-2px;font-size:12px;color:#f0f0f0;">8</div></div><div style="position:absolute;left:0;top:393px;width:1316px;height:18px;overflow:hidden"><div class="t" style="left:10.00px;top:3px;font-size:12px;color:#f0f0f0;">9</div></div><div style="position:absolute;left:0;top:412px;width:1316px;height:18px;overflow:hidden"><div class="t" style="left:6.00px;top:3px;font-size:12px;color:#f0f0f0;">10</div></div><div style="position:absolute;left:0;top:431px;width:1316px;height:23px;overflow:hidden"><div class="t" style="left:6.50px;top:8px;font-size:12px;color:#f0f0f0;">11</div></div><div style="position:absolute;left:0;top:455px;width:1316px;height:17px;overflow:hidden"><div class="t" style="left:6.00px;top:2px;font-size:12px;color:#f0f0f0;">12</div></div><div style="position:absolute;left:0;top:473px;width:1316px;height:19px;overflow:hidden"><div class="t" style="left:6.00px;top:4px;font-size:12px;color:#f0f0f0;">13</div></div><div style="position:absolute;left:0;top:493px;width:1316px;height:13px;overflow:hidden"><div class="t" style="left:6.00px;top:-2px;font-size:12px;color:#f0f0f0;">14</div></div><div style="position:absolute;left:0;top:507px;width:1316px;height:16px;overflow:hidden"><div class="t" style="left:6.00px;top:1px;font-size:12px;color:#f0f0f0;">15</div></div><div style="position:absolute;left:0;top:524px;width:1316px;height:17px;overflow:hidden"><div class="t" style="left:6.00px;top:2px;font-size:12px;color:#f0f0f0;">16</div></div><div style="position:absolute;left:0;top:542px;width:1316px;height:19px;overflow:hidden"><div class="t" style="left:6.00px;top:4px;font-size:12px;color:#f0f0f0;">17</div></div><div style="position:absolute;left:0;top:562px;width:1316px;height:16px;overflow:hidden"><div class="t" style="left:6.00px;top:1px;font-size:12px;color:#f0f0f0;">18</div></div><div style="position:absolute;left:0;top:579px;width:1316px;height:17px;overflow:hidden"><div class="t" style="left:6.00px;top:2px;font-size:12px;color:#f0f0f0;">19</div></div><div style="position:absolute;left:0;top:597px;width:1316px;height:13px;overflow:hidden"><div class="t" style="left:6.50px;top:-2px;font-size:12px;color:#f0f0f0;">20</div></div><div style="position:absolute;left:0;top:611px;width:1316px;height:13px;overflow:hidden"><div class="t" style="left:6.50px;top:-2px;font-size:12px;color:#f0f0f0;">21</div></div><div style="position:absolute;left:0;top:625px;width:1316px;height:13px;overflow:hidden"><div class="t" style="left:6.50px;top:-2px;font-size:12px;color:#f0f0f0;">22</div></div><div style="position:absolute;left:0;top:639px;width:1316px;height:13px;overflow:hidden"><div class="t" style="left:6.50px;top:-2px;font-size:12px;color:#f0f0f0;">23</div></div><div style="position:absolute;left:0;top:653px;width:1316px;height:13px;overflow:hidden"><div class="t" style="left:6.50px;top:-2px;font-size:12px;color:#f0f0f0;">24</div></div><div style="position:absolute;left:0;top:667px;width:1316px;height:13px;overflow:hidden"><div class="t" style="left:6.50px;top:-2px;font-size:12px;color:#f0f0f0;">25</div></div><div style="position:absolute;left:0;top:681px;width:1316px;height:13px;overflow:hidden"><div class="t" style="left:6.50px;top:-2px;font-size:12px;color:#f0f0f0;">26</div></div><div style="position:absolute;left:0;top:695px;width:1316px;height:13px;overflow:hidden"><div class="t" style="left:6.50px;top:-2px;font-size:12px;color:#f0f0f0;">27</div></div><div style="position:absolute;left:0;top:709px;width:1316px;height:13px;overflow:hidden"><div class="t" style="left:6.50px;top:-2px;font-size:12px;color:#f0f0f0;">28</div></div><div style="position:absolute;left:0;top:723px;width:1316px;height:13px;overflow:hidden"><div class="t" style="left:6.50px;top:-2px;font-size:12px;color:#f0f0f0;">29</div></div><div style="position:absolute;left:0;top:737px;width:1316px;height:13px;overflow:hidden"><div class="t" style="left:6.00px;top:-2px;font-size:12px;color:#f0f0f0;">30</div></div><div style="position:absolute;left:0;top:751px;width:1316px;height:13px;overflow:hidden"><div class="t" style="left:6.00px;top:-2px;font-size:12px;color:#f0f0f0;">31</div></div><div style="position:absolute;left:0;top:765px;width:1316px;height:13px;overflow:hidden"><div class="t" style="left:6.00px;top:-2px;font-size:12px;color:#f0f0f0;">32</div></div><div style="position:absolute;left:0;top:779px;width:1316px;height:13px;overflow:hidden"><div class="t" style="left:6.00px;top:-2px;font-size:12px;color:#f0f0f0;">33</div></div><div style="position:absolute;left:0;top:793px;width:1316px;height:13px;overflow:hidden"><div class="t" style="left:6.00px;top:-2px;font-size:12px;color:#f0f0f0;">34</div></div><div style="position:absolute;left:0;top:807px;width:1316px;height:13px;overflow:hidden"><div class="t" style="left:6.00px;top:-2px;font-size:12px;color:#f0f0f0;">35</div></div><div style="position:absolute;left:0;top:821px;width:1316px;height:13px;overflow:hidden"><div class="t" style="left:6.00px;top:-2px;font-size:12px;color:#f0f0f0;">36</div></div><div style="position:absolute;left:0;top:835px;width:1316px;height:13px;overflow:hidden"><div class="t" style="left:6.00px;top:-2px;font-size:12px;color:#f0f0f0;">37</div></div><div style="position:absolute;left:0;top:849px;width:1316px;height:13px;overflow:hidden"><div class="t" style="left:6.00px;top:-2px;font-size:12px;color:#f0f0f0;">38</div></div><div style="position:absolute;left:0;top:863px;width:1316px;height:13px;overflow:hidden"><div class="t" style="left:6.00px;top:-2px;font-size:12px;color:#f0f0f0;">39</div></div><div style="position:absolute;left:0;top:877px;width:1316px;height:13px;overflow:hidden"><div class="t" style="left:6.50px;top:-2px;font-size:12px;color:#f0f0f0;">40</div></div><div style="position:absolute;left:0;top:891px;width:1316px;height:13px;overflow:hidden"><div class="t" style="left:6.50px;top:-2px;font-size:12px;color:#f0f0f0;">41</div></div><div class="t" style="left:262.60px;top:240px;font-size:13.9px;font-weight:bold;letter-spacing:-0.105px;">PLANT LOCATION MODEL</div><div class="t" style="left:32.30px;top:263px;font-size:13.9px;font-weight:bold;letter-spacing:-0.291px;">Given transportation rates between cities and fixed costs of having a plant open,</div><div class="t" style="left:40.60px;top:283px;font-size:13.9px;font-weight:bold;letter-spacing:-0.200px;">capacity at each supply city, demand at each demand city,</div><div class="t" style="left:617.50px;top:284px;font-size:13.3px;font-weight:bold;letter-spacing:0.042px;">Two additional features, can specify:</div><div class="t" style="left:35.40px;top:304px;font-size:13.9px;font-weight:bold;letter-spacing:-0.323px;">1) Which supply plants should be opened, and</div><div class="t" style="left:633.50px;top:305px;font-size:13.3px;font-weight:bold;letter-spacing:-0.120px;">a) a cost/distance to convert distance to cost,</div><div class="t" style="left:36.20px;top:322px;font-size:13.9px;font-weight:bold;letter-spacing:-0.289px;">2) how much should be shipped from each plant to each demand city?</div><div class="t" style="left:632.50px;top:323px;font-size:13.3px;font-weight:bold;letter-spacing:-0.017px;">b) max distance limit. Cannot supply to k from j, if distance (and thus time) is too great.</div><div class="t" style="left:653.00px;top:341px;font-size:13.3px;font-weight:bold;letter-spacing:-0.036px;">Note, because of feature (b), you may want to use the What'sBest! option:</div><div class="t" style="left:262.40px;top:361px;font-size:13.9px;font-weight:bold;letter-spacing:-0.410px;">Demand City</div><div class="t" style="left:661.50px;top:362px;font-size:13.3px;font-weight:bold;letter-spacing:-0.079px;">What'sBest  | Options |  Linear  Solver | Assume Linear Method | Yes</div><div class="t" style="left:147.90px;top:394px;font-size:13.9px;font-weight:bold;letter-spacing:-0.450px;">Atlanta</div><div class="t" style="left:208.60px;top:394px;font-size:13.9px;font-weight:bold;letter-spacing:-0.840px;">Boston</div><div class="t" style="left:264.10px;top:394px;font-size:13.9px;font-weight:bold;letter-spacing:-0.433px;">Chicago</div><div class="t" style="left:326.30px;top:394px;font-size:13.9px;font-weight:bold;letter-spacing:-0.400px;">Denver</div><div class="t" style="left:385.50px;top:394px;font-size:13.9px;font-weight:bold;letter-spacing:-0.575px;">Omaha</div><div class="t" style="left:440.30px;top:394px;font-size:13.9px;font-weight:bold;letter-spacing:-0.357px;">Portland</div><div class="t" style="left:500.60px;top:394px;font-size:13.9px;font-weight:bold;letter-spacing:-0.550px;">Monthly</div><div class="t" style="left:80.80px;top:413px;font-size:13.9px;font-weight:bold;letter-spacing:-0.233px;">Demand:</div><div class="t" style="left:168.70px;top:414px;font-size:13px;font-weight:bold;">10.0</div><div class="t" style="left:235.90px;top:414px;font-size:13px;font-weight:bold;">8.0</div><div class="t" style="left:287.40px;top:414px;font-size:13px;font-weight:bold;">12.0</div><div class="t" style="left:353.30px;top:414px;font-size:13px;font-weight:bold;">6.0</div><div class="t" style="left:412.20px;top:414px;font-size:13px;font-weight:bold;">8.0</div><div class="t" style="left:467.50px;top:414px;font-size:13px;font-weight:bold;">11.0</div><div class="t" style="left:561.30px;top:437px;font-size:13.9px;font-weight:bold;letter-spacing:-0.483px;">Monthly</div><div class="t" style="left:51.60px;top:455px;font-size:13.9px;font-weight:bold;letter-spacing:-0.388px;">Candidate</div><div class="t" style="left:569.00px;top:455px;font-size:13.9px;font-weight:bold;letter-spacing:-0.720px;">Supply</div><div class="t" style="left:62.70px;top:475px;font-size:13.9px;font-weight:bold;letter-spacing:-0.880px;">Supply</div><div class="t" style="left:507.60px;top:475px;font-size:13.9px;font-weight:bold;letter-spacing:-0.025px;">Fixed</div><div class="t" style="left:557.20px;top:475px;font-size:13.9px;font-weight:bold;letter-spacing:-0.543px;">Capacity</div><div style="position:absolute;left:0;top:493px;width:1316px;height:13px;overflow:hidden"><div class="t" style="left:66.40px;top:-4px;font-size:13.9px;font-weight:bold;letter-spacing:-0.500px;text-decoration:underline;">Cities</div></div><div style="position:absolute;left:0;top:493px;width:1316px;height:13px;overflow:hidden"><div class="t" style="left:204.20px;top:-4px;font-size:13.9px;font-weight:bold;letter-spacing:-0.412px;text-decoration:underline;">Shipping distance</div></div><div style="position:absolute;left:0;top:493px;width:1316px;height:13px;overflow:hidden"><div class="t" style="left:512.90px;top:-4px;font-size:13.9px;font-weight:bold;letter-spacing:-1.300px;">Cost</div></div><div style="position:absolute;left:0;top:493px;width:1316px;height:13px;overflow:hidden"><div class="t" style="left:565.60px;top:-4px;font-size:13.9px;font-weight:bold;letter-spacing:-0.367px;">in Tons</div></div><div class="t" style="left:75.70px;top:506px;font-size:13.9px;font-weight:bold;letter-spacing:-0.325px;">Baltimore</div><div class="t" style="left:169.60px;top:507px;font-size:13px;font-weight:bold;">1102</div><div class="t" style="left:235.50px;top:507px;font-size:13px;font-weight:bold;">651</div><div class="t" style="left:288.80px;top:507px;font-size:13px;font-weight:bold;">1130</div><div class="t" style="left:346.80px;top:507px;font-size:13px;font-weight:bold;">2674</div><div class="t" style="left:405.70px;top:507px;font-size:13px;font-weight:bold;">1855</div><div class="t" style="left:466.90px;top:507px;font-size:13px;font-weight:bold;">4515</div><div class="t" style="left:508.00px;top:507px;font-size:13px;font-weight:bold;">$7,650</div><div class="t" style="left:582.80px;top:507px;font-size:13px;font-weight:bold;">18.0</div><div class="t" style="left:74.00px;top:524px;font-size:13.9px;font-weight:bold;letter-spacing:-0.414px;">Cheyenne</div><div class="t" style="left:168.60px;top:525px;font-size:13px;font-weight:bold;">2314</div><div class="t" style="left:228.50px;top:525px;font-size:13px;font-weight:bold;">3105</div><div class="t" style="left:287.80px;top:525px;font-size:13px;font-weight:bold;">1547</div><div class="t" style="left:353.80px;top:525px;font-size:13px;font-weight:bold;">161</div><div class="t" style="left:413.70px;top:525px;font-size:13px;font-weight:bold;">800</div><div class="t" style="left:466.90px;top:525px;font-size:13px;font-weight:bold;">1870</div><div class="t" style="left:508.00px;top:525px;font-size:13px;font-weight:bold;">$5,500</div><div class="t" style="left:582.80px;top:525px;font-size:13px;font-weight:bold;">24.0</div><div class="t" style="left:76.30px;top:544px;font-size:13.9px;font-weight:bold;letter-spacing:-0.525px;">Salt_Lake</div><div class="t" style="left:168.60px;top:545px;font-size:13px;font-weight:bold;">2544</div><div class="t" style="left:228.50px;top:545px;font-size:13px;font-weight:bold;">3809</div><div class="t" style="left:287.80px;top:545px;font-size:13px;font-weight:bold;">2251</div><div class="t" style="left:354.80px;top:545px;font-size:13px;font-weight:bold;">836</div><div class="t" style="left:405.70px;top:545px;font-size:13px;font-weight:bold;">1505</div><div class="t" style="left:466.90px;top:545px;font-size:13px;font-weight:bold;">1233</div><div class="t" style="left:508.00px;top:545px;font-size:13px;font-weight:bold;">$5,000</div><div class="t" style="left:582.80px;top:545px;font-size:13px;font-weight:bold;">27.0</div><div class="t" style="left:80.50px;top:561px;font-size:13.9px;font-weight:bold;letter-spacing:-0.567px;">Memphis</div><div class="t" style="left:176.60px;top:562px;font-size:13px;font-weight:bold;">629</div><div class="t" style="left:229.50px;top:562px;font-size:13px;font-weight:bold;">2118</div><div class="t" style="left:294.80px;top:562px;font-size:13px;font-weight:bold;">858</div><div class="t" style="left:346.80px;top:562px;font-size:13px;font-weight:bold;">1759</div><div class="t" style="left:405.70px;top:562px;font-size:13px;font-weight:bold;">1022</div><div class="t" style="left:466.90px;top:562px;font-size:13px;font-weight:bold;">3620</div><div class="t" style="left:508.00px;top:562px;font-size:13px;font-weight:bold;">$4,100</div><div class="t" style="left:582.80px;top:562px;font-size:13px;font-weight:bold;">22.0</div><div class="t" style="left:90.60px;top:579px;font-size:13.9px;font-weight:bold;letter-spacing:-0.417px;">Wichita</div><div class="t" style="left:168.60px;top:580px;font-size:13px;font-weight:bold;">1543</div><div class="t" style="left:228.50px;top:580px;font-size:13px;font-weight:bold;">2614</div><div class="t" style="left:288.80px;top:580px;font-size:13px;font-weight:bold;">1138</div><div class="t" style="left:354.80px;top:580px;font-size:13px;font-weight:bold;">837</div><div class="t" style="left:413.70px;top:580px;font-size:13px;font-weight:bold;">483</div><div class="t" style="left:466.90px;top:580px;font-size:13px;font-weight:bold;">2817</div><div class="t" style="left:508.00px;top:580px;font-size:13px;font-weight:bold;">$2,500</div><div class="t" style="left:582.80px;top:580px;font-size:13px;font-weight:bold;">31.0</div><div style="position:absolute;left:0;top:611px;width:1316px;height:13px;overflow:hidden"><div class="t" style="left:86.90px;top:-4px;font-size:13.9px;font-weight:bold;letter-spacing:-0.850px;">Cost/KM</div></div><div style="position:absolute;left:0;top:611px;width:1316px;height:13px;overflow:hidden"><div class="t" style="left:172.50px;top:-3px;font-size:13px;font-weight:bold;">0.15</div></div><div class="t" style="left:25.40px;top:621px;font-size:13.9px;font-weight:bold;letter-spacing:-0.100px;">Max allowed dist:</div><div class="t" style="left:161.50px;top:622px;font-size:13px;font-weight:bold;">99999</div><div class="t" style="left:27.40px;top:679px;font-size:12px;letter-spacing:0.075px;">Keywords:  Assume linear, Excel, Fixed cost,  Plant location,  SUMIFS, Supply Chain,  Transportation model,  What'sBest;</div>

</body></html>
